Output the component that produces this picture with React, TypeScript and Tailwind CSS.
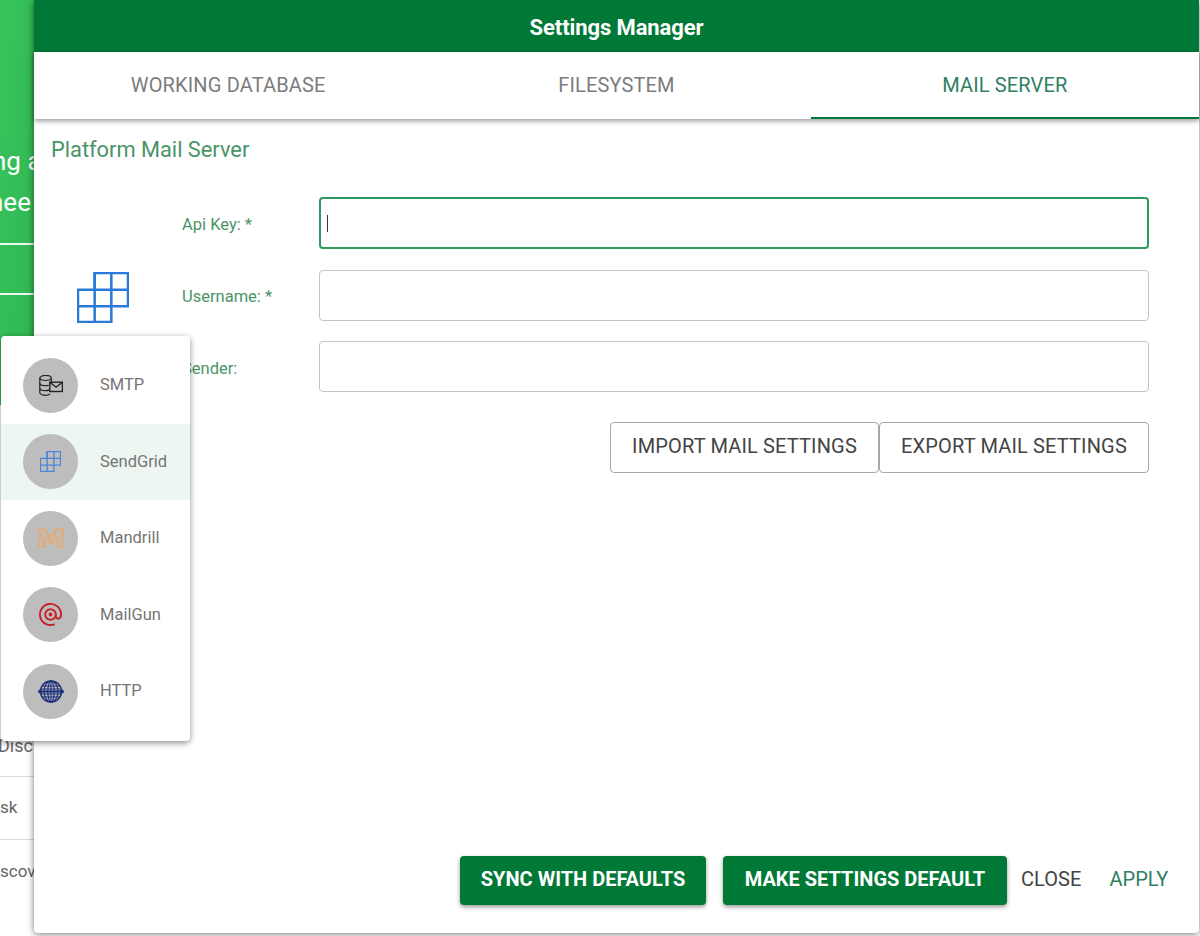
import React from "react";

const font = { fontFamily: "Roboto, 'Liberation Sans', sans-serif" };

function SendGridLogo({ className, sw = 2, color = "#2b7ad9" }: { className?: string; sw?: number; color?: string }) {
  return (
    <svg viewBox="0 0 53 52" className={className} fill="none" stroke={color} strokeWidth={sw}>
      <path d="M18 1h34v34H35v16H1V18h17z" />
      <path d="M35 1v34M18 1v34M18 18h34M1 35h34M18 35v16" />
    </svg>
  );
}

function SmtpIcon() {
  return (
    <svg viewBox="0 0 24 21" className="w-[24px] h-[21px]" fill="none" stroke="#222222" strokeWidth={1.2}>
      <ellipse cx="6.5" cy="3" rx="5.7" ry="2.5" />
      <path d="M.8 3v14.5C.8 19 3.4 20.3 6.5 20.3c2 0 3.6-.5 4.6-1.3" />
      <path d="M.8 8c0 1.5 2.6 2.7 5.7 2.7 1.2 0 2.4-.2 3.3-.5M.8 13c0 1.5 2.6 2.7 5.7 2.7 1.6 0 3-.3 4-.8M12.2 3v4" />
      <rect x="10.8" y="7.2" width="12.6" height="9.3" fill="#bdbdbd" strokeWidth={1.4} />
      <path d="M10.8 7.2l6.3 5 6.3-5" strokeWidth={1.4} />
    </svg>
  );
}

function MandrillIcon() {
  return (
    <svg viewBox="0 0 26 20" className="w-[26px] h-[20px]" fill="none" stroke="#e6a96f" strokeWidth={1.3}>
      <path d="M1 1h6l6 8 6-8h6v18h-6V9l-6 7-6-7v10H1z" />
      <path d="M1 1l6 18M25 1l-6 18M7 1l6 15M19 1l-6 15" />
    </svg>
  );
}

function MailGunIcon() {
  return (
    <svg viewBox="0 0 26 26" className="w-[25px] h-[25px]" fill="none" stroke="#c8232c" strokeWidth={2}>
      <circle cx="13" cy="13" r="2" fill="#c8232c" stroke="none" />
      <circle cx="13" cy="13" r="5.5" />
      <path d="M18.5 13v2.2c0 3 5.5 3 5.5-2.2A11 11 0 1 0 17.5 23" />
    </svg>
  );
}

function HttpIcon() {
  return (
    <svg viewBox="0 0 26 23" className="w-[26px] h-[23px]" fill="none" stroke="#1b2f7a" strokeWidth={1.1}>
      <circle cx="13" cy="11.5" r="10.5" strokeWidth={1.4} />
      <ellipse cx="13" cy="11.5" rx="7" ry="10.5" />
      <ellipse cx="13" cy="11.5" rx="3.2" ry="10.5" />
      <path d="M13 1v21M4 6h18M3 9h20M3 14h20M4 17h18" />
      <path d="M1 11.5h24" strokeWidth={2} />
      <circle cx="2" cy="11.5" r="1.9" fill="#1b2f7a" stroke="none" />
      <circle cx="24" cy="11.5" r="1.9" fill="#1b2f7a" stroke="none" />
    </svg>
  );
}

const menu = [
  { label: "SMTP", icon: <SmtpIcon /> },
  { label: "SendGrid", icon: <SendGridLogo className="w-[21px] h-[21px]" sw={3.4} color="#4a86d8" />, active: true },
  { label: "Mandrill", icon: <MandrillIcon /> },
  { label: "MailGun", icon: <MailGunIcon /> },
  { label: "HTTP", icon: <HttpIcon /> },
];

function Field({ label, focused }: { label: string; focused?: boolean }) {
  return (
    <div className="flex items-center">
      <div className="w-[137px] pt-[5px] text-[16.5px] text-[#4a9468]">{label}</div>
      <div
        className={
          focused
            ? "flex-1 h-[52px] rounded border-2 border-[#2f9a5d] flex items-center pl-[6px]"
            : "flex-1 h-[51px] rounded border border-[#c4c4c4]"
        }
      >
        {focused && <div className="w-px h-[17px] bg-[#333333]" />}
      </div>
    </div>
  );
}

export default function App() {
  return (
    <div className="relative flex w-[1200px] h-[936px] overflow-hidden bg-white" style={font}>
      {/* page behind the dialog */}
      <div className="w-[34px] h-full shrink-0 overflow-hidden flex flex-col text-[#666666]">
        <div className="h-[405px] shrink-0 bg-gradient-to-br from-[#38c45c] to-[#30b551] text-white overflow-hidden">
          <div className="h-[141px]" />
          <div className="text-[26px] leading-[41px] whitespace-nowrap -ml-[8px]">ng a</div>
          <div className="text-[26px] leading-[41px] whitespace-nowrap -ml-[11px]">nee</div>
          <div className="h-[22px] border-b-2 border-white/90" />
          <div className="h-[50px] border-b-2 border-white/90" />
        </div>
        <div className="h-[328px] shrink-0" />
        <div className="h-[44px] shrink-0 border-b border-[#dddddd] text-[18px] leading-[26px] whitespace-nowrap -ml-[2px] w-[36px] overflow-hidden">
          Disc
        </div>
        <div className="h-[63px] shrink-0 border-b border-[#dddddd] flex items-center text-[17px] whitespace-nowrap">
          sk
        </div>
        <div className="h-[63px] shrink-0 flex items-center text-[17px] whitespace-nowrap">scov</div>
      </div>

      {/* dialog */}
      <div className="w-[1165px] h-[933px] shrink-0 flex flex-col bg-white rounded-b shadow-[0_1px_7px_rgba(0,0,0,0.55)]">
        <div className="h-[52px] shrink-0 bg-[#007836] text-white flex items-center justify-center pt-[2px] text-[22px] font-bold tracking-[-0.1px]">
          Settings Manager
        </div>
        <div className="h-[67px] shrink-0 flex bg-white shadow-[0_2px_5px_rgba(0,0,0,0.4)] z-10 text-[20px] tracking-[0.15px]">
          <div className="flex-1 flex items-center justify-center text-[#7c7c7c] border-b-2 border-transparent">WORKING DATABASE</div>
          <div className="flex-1 flex items-center justify-center text-[#7c7c7c] border-b-2 border-transparent">FILESYSTEM</div>
          <div className="flex-1 flex items-center justify-center text-[#2f8060] border-b-2 border-[#007836]">MAIL SERVER</div>
        </div>

        <div className="flex-1 flex flex-col pl-[17px] pr-[50px]">
          <div className="mt-[18px] text-[21.8px] leading-[26px] text-[#4a9468]">Platform Mail Server</div>
          <div className="mt-[34px] flex">
            <div className="w-[131px] shrink-0 pl-[26px] pt-[75px]">
              <SendGridLogo className="w-[52px] h-[51px]" sw={2.6} />
            </div>
            <div className="flex-1 flex flex-col gap-[20.5px]">
              <Field label="Api Key: *" focused />
              <Field label="Username: *" />
              <Field label="Sender:" />
            </div>
          </div>
          <div className="mt-[30px] flex justify-end text-[20px] tracking-[0.15px] text-[#444444]">
            <button className="w-[269px] h-[51px] pb-[3px] rounded border border-[#a8a8a8]">IMPORT MAIL SETTINGS</button>
            <button className="w-[270px] h-[51px] pb-[3px] rounded border border-[#a8a8a8]">EXPORT MAIL SETTINGS</button>
          </div>
        </div>

        <div className="flex items-center pl-[426px] pb-[28px] text-[20px] tracking-[0.05px]">
          <button className="w-[246px] h-[49px] pb-[3px] rounded bg-[#007836] text-white font-bold tracking-normal shadow-[0_2px_4px_rgba(0,0,0,0.4)]">
            SYNC WITH DEFAULTS
          </button>
          <button className="ml-[17px] w-[284px] h-[49px] pb-[3px] rounded bg-[#007836] text-white font-bold tracking-normal shadow-[0_2px_4px_rgba(0,0,0,0.4)]">
            MAKE SETTINGS DEFAULT
          </button>
          <button className="ml-[14px] pb-[3px] text-[#444444]">CLOSE</button>
          <button className="ml-[28px] pb-[3px] text-[#2f8060]">APPLY</button>
        </div>
      </div>

      {/* select menu */}
      <div className="absolute left-px top-[336px] w-[189px] h-[405px] rounded bg-white py-[11px] shadow-[0_2px_6px_rgba(0,0,0,0.45)] flex flex-col z-20">
        {menu.map((m) => (
          <div
            key={m.label}
            className={
              m.active
                ? "h-[76.5px] flex items-center pl-[22px] bg-[#edf6f1]"
                : "h-[76.5px] flex items-center pl-[22px]"
            }
          >
            <div className="w-[55px] h-[55px] rounded-full bg-[#bdbdbd] flex items-center justify-center shrink-0">
              {m.icon}
            </div>
            <div className="ml-[22px] pt-[1px] text-[16.5px] text-[#757575]">{m.label}</div>
          </div>
        ))}
      </div>
    </div>
  );
}
